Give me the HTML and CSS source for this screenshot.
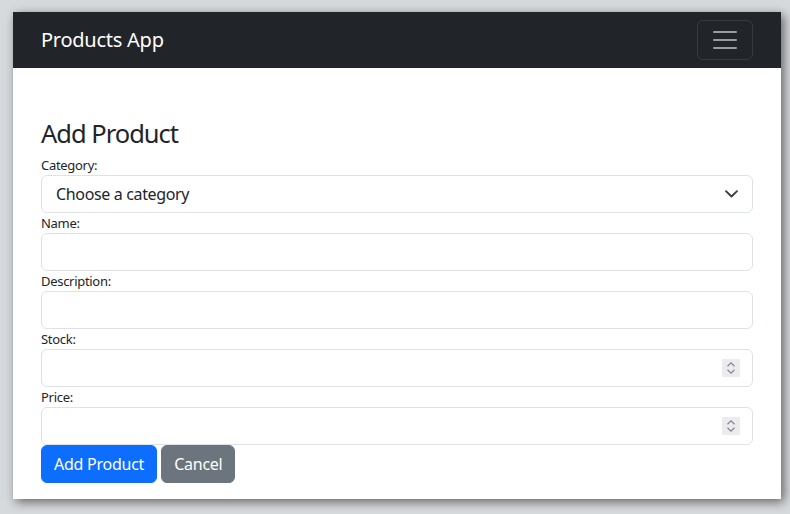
FILE: index.html
```html
<!DOCTYPE html>
<html lang="en">
<head>
<meta charset="utf-8">
<title>Products App</title>
<link rel="stylesheet" href="styles.css">
</head>
<body>
<div class="window">
  <nav class="navbar">
    <span class="brand">Products App</span>
    <button class="toggler" type="button" aria-label="Toggle navigation">
      <svg width="30" height="30" viewBox="0 0 30 30"><path d="M4 7h22M4 15h22M4 23h22" stroke="rgba(255,255,255,0.55)" stroke-width="2" stroke-linecap="round" fill="none"/></svg>
    </button>
  </nav>
  <main class="content">
    <h3 class="title">Add Product</h3>
    <form class="form">
      <label class="label">Category:</label>
      <div class="control select">
        <span class="placeholder">Choose a category</span>
        <svg class="chevron" width="13" height="8" viewBox="0 0 13 8"><path d="M1 1.2l5.5 5.3 5.5-5.3" fill="none" stroke="#343a40" stroke-width="1.8" stroke-linecap="round" stroke-linejoin="round"/></svg>
      </div>
      <label class="label">Name:</label>
      <div class="control"><input class="input" type="text"></div>
      <label class="label">Description:</label>
      <div class="control"><input class="input" type="text"></div>
      <label class="label">Stock:</label>
      <div class="control">
        <input class="input" type="text">
        <span class="spin"><svg width="18" height="18" viewBox="0 0 18 18"><path d="M5.5 7.2 9 3.8 12.5 7.2M5.5 10.8 9 14.2 12.5 10.8" fill="none" stroke="#85858f" stroke-width="1.2"/></svg></span>
      </div>
      <label class="label">Price:</label>
      <div class="control">
        <input class="input" type="text">
        <span class="spin"><svg width="18" height="18" viewBox="0 0 18 18"><path d="M5.5 7.2 9 3.8 12.5 7.2M5.5 10.8 9 14.2 12.5 10.8" fill="none" stroke="#85858f" stroke-width="1.2"/></svg></span>
      </div>
      <div class="actions">
        <button class="btn primary" type="button">Add Product</button>
        <button class="btn secondary" type="button">Cancel</button>
      </div>
    </form>
  </main>
</div>
</body>
</html>
```
FILE: styles.css
```css
html, body {
  margin: 0;
  padding: 0;
}
body {
  background: #d7dadd;
  font-family: "Noto Sans", "Open Sans", sans-serif;
  color: #212529;
  height: 514px;
  overflow: hidden;
}
.window {
  margin: 12px 0 0 13px;
  width: 768px;
  height: 487px;
  background: #fff;
  box-shadow: 3px 3px 10px rgba(0, 0, 0, 0.55);
  overflow: hidden;
}
.navbar {
  height: 56px;
  box-sizing: border-box;
  background: #212529;
  padding: 8px 28px;
  display: flex;
  align-items: center;
  justify-content: space-between;
}
.brand {
  color: #fff;
  font-size: 20px;
  line-height: 30px;
  letter-spacing: -0.25px;
}
.toggler {
  width: 56px;
  height: 40px;
  box-sizing: border-box;
  background: transparent;
  border: 1px solid rgba(255, 255, 255, 0.1);
  border-radius: 6px;
  padding: 0;
  display: flex;
  align-items: center;
  justify-content: center;
}
.content {
  padding: 50px 28px 0;
}
.title {
  margin: 0 0 6px;
  font-size: 25.5px;
  font-weight: 400;
  line-height: 30.6px;
  letter-spacing: -1px;
}
.form {
  display: flex;
  flex-direction: column;
}
.label {
  font-size: 13px;
  line-height: 20px;
  letter-spacing: -0.3px;
}
.control {
  height: 38px;
  box-sizing: border-box;
  border: 1px solid #dee2e6;
  border-radius: 6px;
  display: flex;
  align-items: center;
  padding: 0 12px;
}
.select {
  justify-content: space-between;
  padding: 0 14px 0 14px;
}
.placeholder {
  font-size: 16px;
  line-height: 24px;
  letter-spacing: -0.35px;
}
.input {
  flex: 1;
  border: 0;
  outline: 0;
  padding: 0;
  font: inherit;
  font-size: 16px;
  background: transparent;
  min-width: 0;
}
.spin {
  width: 18px;
  height: 18px;
  background: #ebebf0;
  display: flex;
}
.actions {
  display: flex;
  gap: 4px;
}
.btn {
  height: 38px;
  border: 1px solid transparent;
  border-radius: 6px;
  padding: 0 12px;
  font: inherit;
  font-size: 16px;
  letter-spacing: -0.25px;
  color: #fff;
}
.primary {
  background: #0d6efd;
  border-color: #0d6efd;
}
.secondary {
  background: #6c757d;
  border-color: #6c757d;
}
```
